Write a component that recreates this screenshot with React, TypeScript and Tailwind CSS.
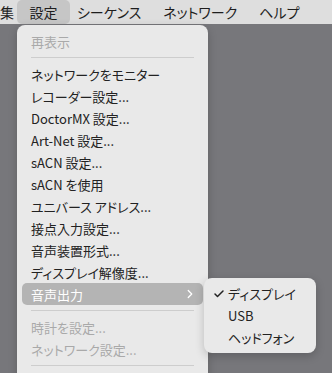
import { Check, ChevronRight } from "lucide-react";

const font = {
  fontFamily: '"Noto Sans CJK JP", "Noto Sans", sans-serif',
};

type Row = { label: string; disabled?: boolean; sep?: boolean; active?: boolean };

const rows: Row[] = [
  { label: "再表示", disabled: true },
  { label: "", sep: true },
  { label: "ネットワークをモニター" },
  { label: "レコーダー設定..." },
  { label: "DoctorMX 設定..." },
  { label: "Art-Net 設定..." },
  { label: "sACN 設定..." },
  { label: "sACN を使用" },
  { label: "ユニバース アドレス..." },
  { label: "接点入力設定..." },
  { label: "音声装置形式..." },
  { label: "ディスプレイ解像度..." },
  { label: "音声出力", active: true },
  { label: "", sep: true },
  { label: "時計を設定...", disabled: true },
  { label: "ネットワーク設定...", disabled: true },
  { label: "", sep: true },
];

export default function App() {
  return (
    <div
      className="relative w-[332px] h-[373px] overflow-hidden bg-[#77777b] text-[13px] [font-feature-settings:'palt']"
      style={font}
    >
      {/* menu bar */}
      <div className="flex items-center h-[24px] bg-[#dedede] text-[#1e1e1e] text-[14px]">
        <span className="w-[17px]">集</span>
        <span className="flex items-center justify-center w-[53px] h-[24px] rounded-[5px] bg-[#c6c6c6]">設定</span>
        <span className="ml-[7px]">シーケンス</span>
        <span className="ml-[22px]">ネットワーク</span>
        <span className="ml-[22px]">ヘルプ</span>
      </div>

      {/* dropdown */}
      <div className="absolute left-[17px] top-[25px] w-[191px] rounded-t-[8px] bg-[#e9e9e9] pt-[5px] pb-[20px] px-[5px] shadow-[0_3px_10px_rgba(0,0,0,0.2)]">
        {rows.map((r, i) =>
          r.sep ? (
            <div key={i} className="h-[11px] flex items-center px-[9px]">
              <div className="h-px w-full bg-[#cdcdcd]" />
            </div>
          ) : (
            <div
              key={i}
              className={
                "flex items-center h-[22px] pl-[9px] pr-[6px] rounded-[5px] " +
                (r.active ? "bg-[#b4b4b4] text-white" : r.disabled ? "text-[#a9a9a9]" : "text-[#222222]")
              }
            >
              <span className="flex-1 leading-none">{r.label}</span>
              {r.active && <ChevronRight size={14} strokeWidth={2.2} />}
            </div>
          )
        )}
      </div>

      {/* submenu */}
      <div className="absolute left-[204px] top-[278px] w-[112px] rounded-[8px] bg-[#e9e9e9] pt-[5px] pb-[4px] px-[5px] text-[#222222] shadow-[0_3px_10px_rgba(0,0,0,0.2)]">
        <div className="flex items-center h-[22px]">
          <span className="w-[19px] flex justify-center">
            <Check size={12} strokeWidth={3} />
          </span>
          <span>ディスプレイ</span>
        </div>
        <div className="flex items-center h-[22px] pl-[19px]">USB</div>
        <div className="flex items-center h-[22px] pl-[19px]">ヘッドフォン</div>
      </div>
    </div>
  );
}
